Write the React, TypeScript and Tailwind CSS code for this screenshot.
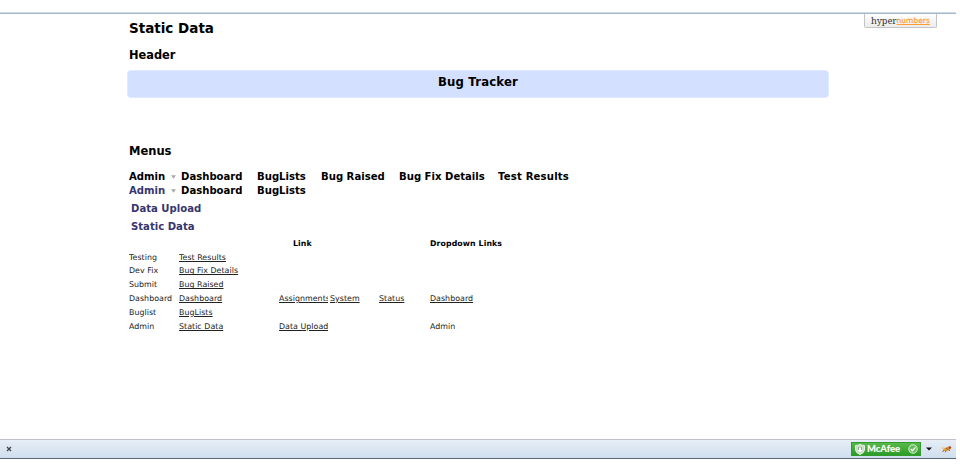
import React from "react";

function Cell({ w, children, link = false }: { w: string; children?: React.ReactNode; link?: boolean }) {
  return (
    <div className={`${w} h-[12px] shrink-0 overflow-hidden whitespace-nowrap`}>
      <span className={link ? "underline underline-offset-1" : ""}>{children}</span>
    </div>
  );
}

function Caret() {
  return (
    <svg className="ml-[6px] h-[4px] w-[5px]" viewBox="0 0 5 4">
      <path d="M0 .2H5L2.5 3.8Z" fill="#a8a8a8" />
    </svg>
  );
}

const rows = [
  ["Testing", "Test Results", "", "", "", ""],
  ["Dev Fix", "Bug Fix Details", "", "", "", ""],
  ["Submit", "Bug Raised", "", "", "", ""],
  ["Dashboard", "Dashboard", "Assignments", "System", "Status", "Dashboard"],
  ["Buglist", "BugLists", "", "", "", ""],
  ["Admin", "Static Data", "Data Upload", "", "", "Admin"],
];

export default function App() {
  return (
    <div className="h-[467px] w-[960px] overflow-hidden bg-white font-['DejaVu_Sans',sans-serif] text-black">
      <div className="flex h-[459px] w-[956px] flex-col">
        <div className="mt-[12px] h-[2px] shrink-0 border-t border-b border-t-[#cddcec] border-b-[#aab4c8]" />
        <main className="flex grow justify-between">
          <div className="ml-[127px] flex w-[702px] flex-col whitespace-nowrap">
            <h1 className="mt-[5px] ml-[2px] h-[18px] text-[13.5px] leading-[18px] font-bold">Static Data</h1>
            <h2 className="mt-[10px] ml-[2px] h-[16px] text-[11.4px] leading-[16px] font-bold">Header</h2>
            <div className="mt-[7px] h-[28px] rounded-[4px] border border-[#dfe9ff] bg-[#d3e0ff] pt-[3px] text-center text-[11.7px] leading-[16px] font-bold tracking-[0.17px]">
              Bug Tracker
            </div>
            <h2 className="mt-[45px] ml-[2px] h-[16px] text-[11.5px] leading-[16px] font-bold">Menus</h2>
            <nav className="mt-[11px] ml-[2px] text-[10.1px] leading-[14px] font-bold">
              <div className="flex h-[14px]">
                <div className="flex w-[52px] items-center">Admin<Caret /></div>
                <div className="w-[76px]">Dashboard</div>
                <div className="h-[12px] w-[64px] overflow-hidden">BugLists</div>
                <div className="w-[78px]">Bug Raised</div>
                <div className="w-[99px]">Bug Fix Details</div>
                <div className="tracking-[0.18px]">Test Results</div>
              </div>
              <div className="flex h-[14px]">
                <div className="flex w-[52px] items-center text-[#363670]">Admin<Caret /></div>
                <div className="w-[76px]">Dashboard</div>
                <div>BugLists</div>
              </div>
              <div className="mt-[4px] ml-[2px] flex flex-col gap-[4px] text-[#363670]">
                <div>Data Upload</div>
                <div>Static Data</div>
              </div>
            </nav>
            <div className="mt-[4px] ml-[2px] text-[7.9px] leading-[12px] tracking-[0.03px] text-[#222]">
              <div className="flex text-[7.8px] font-bold tracking-[0.1px] text-black">
                <div className="ml-[164px] w-[137px]">Link</div>
                <div>Dropdown Links</div>
              </div>
              <div className="mt-[1.6px] flex flex-col gap-[1.8px]">
                {rows.map((r, i) => (
                  <div className="flex" key={i}>
                    <Cell w="w-[50px]">{r[0]}</Cell>
                    <Cell w="w-[100px]" link>{r[1]}</Cell>
                    <Cell w="w-[49px]" link>{r[2]}</Cell>
                    <Cell w="ml-[2px] w-[49px]" link>{r[3]}</Cell>
                    <Cell w="w-[51px]" link>{r[4]}</Cell>
                    <Cell w="w-[70px]" link={i === 3}>{r[5]}</Cell>
                  </div>
                ))}
              </div>
            </div>
          </div>
          <div className="mr-[19px] flex h-[14px] w-[73px] items-center justify-center rounded-b-[2px] border border-t-0 border-[#c4c4c4] bg-linear-to-b from-white to-[#ececec] leading-[12px]">
            <span className="font-['Noto_Serif','DejaVu_Serif',serif] text-[9.2px] tracking-[-0.05px] text-[#333]">hyper</span>
            <span className="font-['DejaVu_Sans',sans-serif] text-[7.4px] tracking-[0.1px] text-[#ff9c32] underline [-webkit-text-stroke:0.2px_#ff9c32]">numbers</span>
          </div>
        </main>
        <footer className="flex h-[20px] shrink-0 items-center border-t border-b border-t-[#c1c1cf] border-b-[#596577] bg-linear-to-b from-[#e6eef7] to-[#d0deed]">
          <svg className="ml-[6px] h-[6px] w-[6px]" viewBox="0 0 6 6">
            <path d="M1 1L5 5M5 1L1 5" stroke="#444" strokeWidth="1.3" />
          </svg>
          <div className="ml-auto flex h-[14px] w-[70px] items-center border border-[#319c2c] bg-linear-to-b from-[#57b94a] to-[#2b9b27] pl-[3px] text-white">
            <svg className="h-[11px] w-[10px]" viewBox="0 0 10 11">
              <path d="M.5 1.5Q3 1.5 5 .4Q7 1.5 9.5 1.5V6Q9 9 5 10.6Q1 9 .5 6Z" fill="#c5dcc3" stroke="#fff" strokeWidth=".8" />
              <path d="M2.3 2.7L5 4.5L7.7 2.7V6.3L5 8L2.3 6.3Z" fill="#fff" />
              <path d="M3.3 3.2V6M6.7 3.2V6" stroke="#4d8f49" strokeWidth=".9" />
            </svg>
            <span className="ml-[2px] w-[35px] font-['Lato',sans-serif] text-[9.4px] leading-[12px] font-black [-webkit-text-stroke:0.1px_white]">McAfee</span>
            <svg className="ml-[6px] h-[10px] w-[10px]" viewBox="0 0 10 10">
              <circle cx="5" cy="5" r="4.2" fill="#63bd59" stroke="#d9f4d4" />
              <path d="M2.7 5L4.4 6.7L7.5 3.4" fill="none" stroke="#fff" strokeWidth="1.3" />
            </svg>
          </div>
          <svg className="ml-[5px] h-[4px] w-[6px]" viewBox="0 0 6 4">
            <path d="M0 .5H6L3 3.5Z" fill="#111" />
          </svg>
          <svg className="ml-[9px] mr-[4px] h-[10px] w-[11px]" viewBox="0 0 11 10">
            <path d="M.5 3L4 4L2 5.5Z" fill="#edc47d" />
            <ellipse cx="6" cy="5" rx="3.8" ry="1.9" transform="rotate(-20 6 5)" fill="#e6a13a" />
            <circle cx="8.8" cy="3.6" r="1.4" fill="#a84826" />
            <path d="M3 6L1.5 8M5 6.5L4.5 8.3M7.5 5.5L9 7M5 4L7 5.5" stroke="#7d4424" strokeWidth=".8" />
          </svg>
        </footer>
      </div>
    </div>
  );
}
